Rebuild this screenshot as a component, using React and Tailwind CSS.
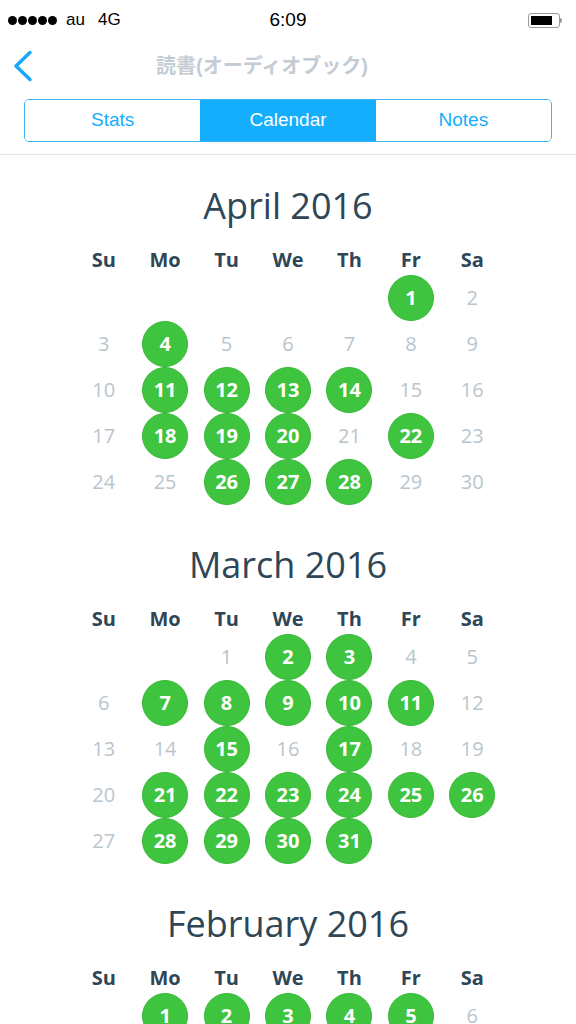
const WEEK = ["Su", "Mo", "Tu", "We", "Th", "Fr", "Sa"];

const MONTHS = [
  {
    title: "April 2016",
    start: 5,
    days: 30,
    done: [1, 4, 11, 12, 13, 14, 18, 19, 20, 22, 26, 27, 28],
  },
  {
    title: "March 2016",
    start: 2,
    days: 31,
    done: [2, 3, 7, 8, 9, 10, 11, 15, 17, 21, 22, 23, 24, 25, 26, 28, 29, 30, 31],
  },
  {
    title: "February 2016",
    start: 1,
    days: 29,
    done: [1, 2, 3, 4, 5, 8, 9, 10, 11, 15, 16, 17, 22, 23, 24, 25],
  },
];

const buildCells = (start, days) => {
  const cells = [];
  for (let i = 0; i < start; i++) cells.push(null);
  for (let d = 1; d <= days; d++) cells.push(d);
  while (cells.length % 7 !== 0) cells.push(null);
  return cells;
};

const StatusBar = () => (
  <div className="h-10 flex items-center justify-between px-2 relative text-black">
    <div className="flex items-center gap-[9px] text-[17px]">
      <div className="flex items-center gap-[1px]">
        {[0, 1, 2, 3, 4].map((i) => (
          <span key={i} className="w-[9px] h-[9px] rounded-full bg-black" />
        ))}
      </div>
      <span>au</span>
      <span className="ml-1">4G</span>
    </div>
    <div className="absolute left-0 right-0 text-center text-[19px] font-medium pointer-events-none">
      6:09
    </div>
    <div className="flex items-center mr-[6px]">
      <div className="w-[32px] h-[15px] rounded-[3px] border border-[#9a9a9a] p-[2px] pr-[7px]">
        <div className="w-full h-full bg-black" />
      </div>
      <div className="w-[2px] h-[5px] bg-[#9a9a9a] rounded-r-sm" />
    </div>
  </div>
);

const NavBar = () => (
  <div className="h-[52px] flex items-center relative">
    <svg
      className="absolute left-[12px] top-[10px]"
      width="22"
      height="32"
      viewBox="0 0 22 32"
      fill="none"
      stroke="#18a9f6"
      strokeWidth="3.5"
      strokeLinecap="round"
      strokeLinejoin="round"
    >
      <path d="M18 2.5 L4 16 L18 29.5" />
    </svg>
    <div className="flex-1 text-center pr-[52px] text-[20px] font-bold text-[#c3ccd4]">
      読書(オーディオブック)
    </div>
  </div>
);

const Tabs = () => {
  const tabs = ["Stats", "Calendar", "Notes"];
  return (
    <div className="px-6 pt-[7px] pb-3 border-b border-[#e3e6e8]">
      <div className="grid grid-cols-3 h-[43px] border border-[#3db2f7] rounded-[5px] overflow-hidden">
        {tabs.map((t) => (
          <div
            key={t}
            className={
              t === "Calendar"
                ? "flex items-center justify-center text-[19px] bg-[#15aefc] text-white"
                : "flex items-center justify-center text-[19px] text-[#15aefc] bg-white"
            }
          >
            {t}
          </div>
        ))}
      </div>
    </div>
  );
};

const Month = ({ month }) => {
  const cells = buildCells(month.start, month.days);
  return (
    <div className="mb-[35px]">
      <h2 className="h-[50px] leading-[50px] text-center text-[36px] text-[#2e4656]">
        {month.title}
      </h2>
      <div className="w-[430px] mx-auto mt-[14px]">
        <div className="grid grid-cols-7 h-[30px]">
          {WEEK.map((w) => (
            <div key={w} className="flex items-center justify-center text-[20px] font-bold text-[#2e4656]">
              {w}
            </div>
          ))}
        </div>
        <div className="grid grid-cols-7">
          {cells.map((d, i) => (
            <div key={i} className="h-[46px] flex items-center justify-center">
              {d === null ? null : month.done.includes(d) ? (
                <div className="w-[46px] h-[46px] rounded-full bg-[#3ec43e] border border-[#33b833] flex items-center justify-center text-white text-[20px] font-bold">
                  {d}
                </div>
              ) : (
                <span className="text-[20px] text-[#b9c5cd]">{d}</span>
              )}
            </div>
          ))}
        </div>
      </div>
    </div>
  );
};

const App = () => {
  return (
    <div
      className="w-[576px] h-[1024px] overflow-hidden bg-white"
      style={{ fontFamily: '"Liberation Sans", "Noto Sans CJK JP", sans-serif' }}
    >
      <StatusBar />
      <NavBar />
      <Tabs />
      <div className="pt-[26px]" style={{ fontFamily: '"Open Sans", "Noto Sans", sans-serif' }}>
        {MONTHS.map((m) => (
          <Month key={m.title} month={m} />
        ))}
      </div>
    </div>
  );
};

export default App;
